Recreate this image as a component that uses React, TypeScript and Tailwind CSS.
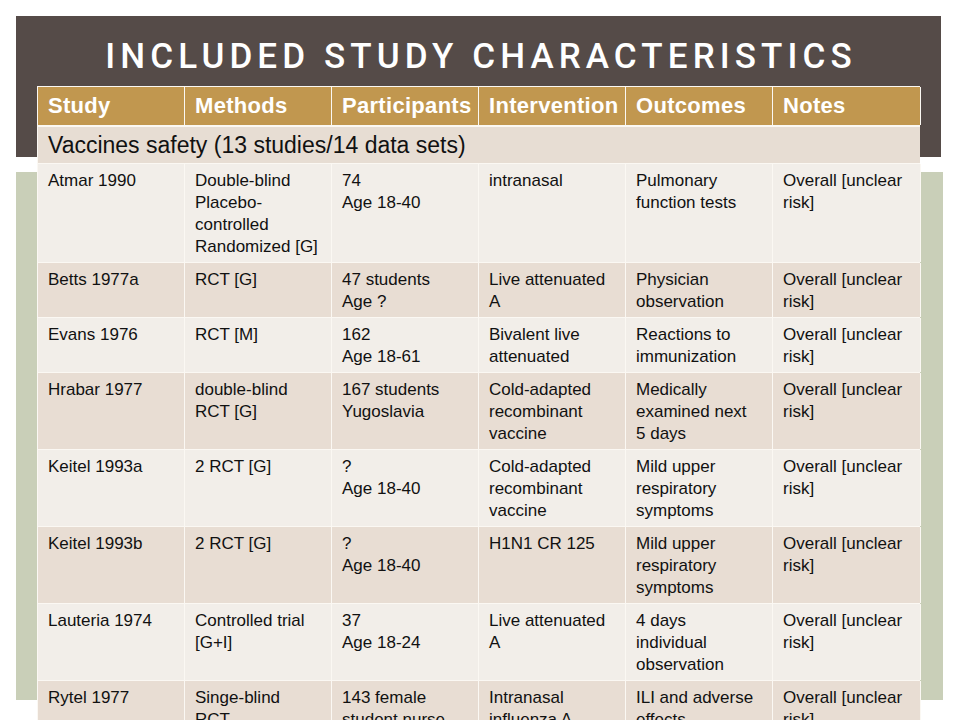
import React from "react";

type Row = { cells: string[][]; dark: boolean };

const rows: Row[] = [
  {
    dark: false,
    cells: [
      ["Atmar 1990"],
      ["Double-blind", "Placebo-", "controlled", "Randomized [G]"],
      ["74", "Age 18-40"],
      ["intranasal"],
      ["Pulmonary", "function tests"],
      ["Overall [unclear", "risk]"],
    ],
  },
  {
    dark: true,
    cells: [
      ["Betts 1977a"],
      ["RCT [G]"],
      ["47 students", "Age ?"],
      ["Live attenuated", "A"],
      ["Physician", "observation"],
      ["Overall [unclear", "risk]"],
    ],
  },
  {
    dark: false,
    cells: [
      ["Evans 1976"],
      ["RCT [M]"],
      ["162", "Age 18-61"],
      ["Bivalent live", "attenuated"],
      ["Reactions to", "immunization"],
      ["Overall [unclear", "risk]"],
    ],
  },
  {
    dark: true,
    cells: [
      ["Hrabar 1977"],
      ["double-blind", "RCT [G]"],
      ["167 students", "Yugoslavia"],
      ["Cold-adapted", "recombinant", "vaccine"],
      ["Medically", "examined next", "5 days"],
      ["Overall [unclear", "risk]"],
    ],
  },
  {
    dark: false,
    cells: [
      ["Keitel 1993a"],
      ["2 RCT [G]"],
      ["?", "Age 18-40"],
      ["Cold-adapted", "recombinant", "vaccine"],
      ["Mild upper", "respiratory", "symptoms"],
      ["Overall [unclear", "risk]"],
    ],
  },
  {
    dark: true,
    cells: [
      ["Keitel 1993b"],
      ["2 RCT [G]"],
      ["?", "Age 18-40"],
      ["H1N1 CR 125"],
      ["Mild upper", "respiratory", "symptoms"],
      ["Overall [unclear", "risk]"],
    ],
  },
  {
    dark: false,
    cells: [
      ["Lauteria 1974"],
      ["Controlled trial", "[G+I]"],
      ["37", "Age 18-24"],
      ["Live attenuated", "A"],
      ["4 days", "individual", "observation"],
      ["Overall [unclear", "risk]"],
    ],
  },
  {
    dark: true,
    cells: [
      ["Rytel 1977"],
      ["Singe-blind", "RCT"],
      ["143 female", "student nurse"],
      ["Intranasal", "influenza A"],
      ["ILI and adverse", "effects"],
      ["Overall [unclear", "risk]"],
    ],
  },
];

const headers = ["Study", "Methods", "Participants", "Intervention", "Outcomes", "Notes"];

export default function App() {
  return (
    <div
      className="relative w-[960px] h-[720px] overflow-hidden bg-white"
      style={{ fontFamily: '"Liberation Sans", Arial, sans-serif' }}
    >
      {/* Title banner */}
      <div className="ml-[16px] mt-[16px] w-[925px] h-[141px] bg-[#554b48] pt-[23px] pl-[5px]">
        <h1
          className="text-center text-white text-[35px] leading-[35px] tracking-[5.1px] font-medium"
          style={{ fontFamily: 'Roboto, "Liberation Sans", sans-serif' }}
        >
          INCLUDED STUDY CHARACTERISTICS
        </h1>
      </div>
      {/* Green panel behind the table */}
      <div className="ml-[16px] mt-[15px] w-[927px] h-[528px] bg-[#c9cfb8]" />

      {/* Table */}
      <div className="absolute left-[37px] top-[86px] w-[883px] border-l border-t border-[#fbf8f3]">
        <div className="grid grid-cols-[147px_147px_147px_147px_147px_148px] bg-[#c1974f] border-b-2 border-[#fbf8f3]">
          {headers.map((h) => (
            <div
              key={h}
              className="h-[38px] pl-[10px] border-r border-[#fbf8f3] text-white font-bold text-[22px] leading-[38px] tracking-[0.3px] whitespace-nowrap"
            >
              {h}
            </div>
          ))}
        </div>
        <div className="h-[37px] bg-[#e7ddd3] border-b border-[#fbf8f3] pl-[10px] text-[23px] leading-[36px] text-[#111] whitespace-nowrap">
          Vaccines safety (13 studies/14 data sets)
        </div>
        {rows.map((r, i) => (
          <div
            key={i}
            className={`grid grid-cols-[147px_147px_147px_147px_147px_148px] border-b border-[#fbf8f3] ${
              r.dark ? "bg-[#e8ddd3]" : "bg-[#f2eee9]"
            }`}
          >
            {r.cells.map((c, j) => (
              <div
                key={j}
                className="pl-[10px] pt-[6px] pb-[4px] border-r border-[#fbf8f3] text-[17px] leading-[22px] text-[#111]"
              >
                {c.map((line, k) => (
                  <div key={k} className="whitespace-nowrap">
                    {line}
                  </div>
                ))}
              </div>
            ))}
          </div>
        ))}
      </div>
    </div>
  );
}
